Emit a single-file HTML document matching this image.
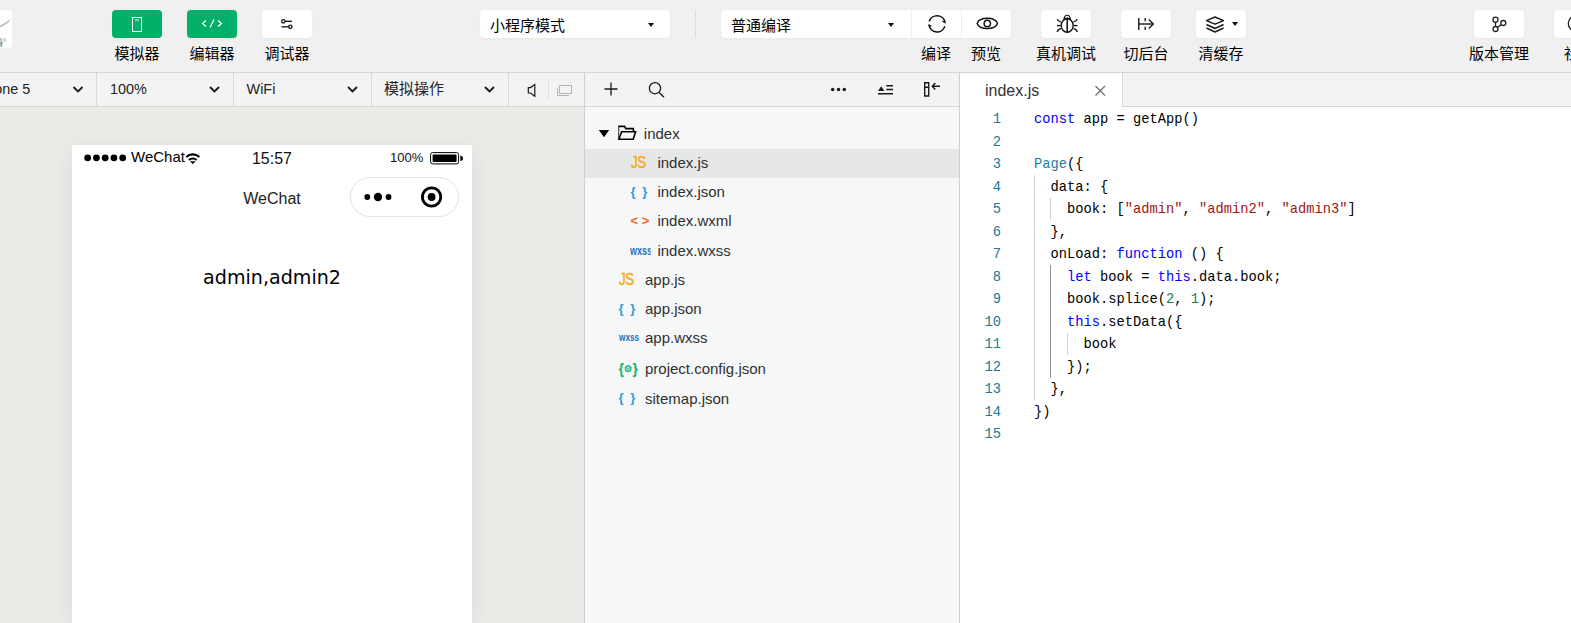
<!DOCTYPE html>
<html lang="zh-CN">
<head>
<meta charset="utf-8">
<title>微信开发者工具</title>
<style>
*{box-sizing:border-box;margin:0;padding:0}
html,body{width:1571px;height:623px;overflow:hidden;background:#f0f0f0}
body{position:relative;font-family:"Liberation Sans","Noto Sans CJK SC",sans-serif;color:#1a1a1a;font-size:15px}
.abs{position:absolute}
/* top toolbar */
#top{left:0;top:0;width:1571px;height:72px;background:#f0f0f0}
#topline{left:0;top:72px;width:1571px;height:1px;background:#d4d4d4}
.btn{position:absolute;top:10px;width:50px;height:28px;border-radius:4px;background:#fff;box-shadow:0 1px 3px rgba(0,0,0,.04)}
.btn.g{background:#02b06a}
.btn svg{position:absolute;left:0;top:0}
.lbl{position:absolute;top:44px;height:20px;line-height:20px;font-size:15px;color:#000;text-align:center;white-space:nowrap;width:90px;margin-left:-45px}
.sel{position:absolute;top:10px;height:28px;background:#fff;border-radius:4px;font-size:15px;line-height:32px;color:#000;white-space:nowrap;box-shadow:0 1px 3px rgba(0,0,0,.04)}
.caret{position:absolute;width:0;height:0;border-left:3.5px solid transparent;border-right:3.5px solid transparent;border-top:4px solid #111}
/* second bar */
#bar2{left:0;top:73px;width:1571px;height:33px;background:#f3f3f3}
#bar2line{left:0;top:106px;width:1571px;height:1px;background:#d6d6d6}
.vd{position:absolute;top:73px;width:1px;height:33px;background:#d9d9d9}
.t2{position:absolute;top:73px;height:33px;line-height:32px;font-size:14.400px;color:#222;white-space:nowrap}
/* simulator */
#sim{left:0;top:107px;width:584px;height:516px;background:#ecebe8}
#simline{left:584px;top:73px;width:1px;height:550px;background:#d0d0d0}
#phone{left:72px;top:145px;width:400px;height:478px;background:#fff;box-shadow:0 4px 22px rgba(0,0,0,.075)}
/* tree */
#tree{left:585px;top:107px;width:374px;height:516px;background:#f6f8f8}
#treeline{left:959px;top:73px;width:1px;height:550px;background:#d0d0d0}
.row{position:absolute;left:585px;width:374px;height:29px;font-size:15px;line-height:29px;color:#303030;white-space:nowrap}
.row span.n{position:absolute;top:0}
.ic{font-family:"Liberation Sans",sans-serif;width:22px;text-align:center;white-space:nowrap}
.ic.js{color:#f7a823;font-size:17px;letter-spacing:-.5px;-webkit-text-stroke:.5px #f7a823;transform:scaleX(.78);transform-origin:0 50%;text-align:left;width:auto}
.ic.jn{color:#1e9fe0;font-weight:bold;font-size:13px;text-align:left;width:auto;word-spacing:3px;margin-top:-.5px}
.ic.xm{color:#f0642a;font-weight:bold;font-size:13px;text-align:left;width:auto}
.ic.ws{color:#1f6fc4;font-weight:bold;font-size:10px;text-align:left;width:auto;transform:scaleX(.82);transform-origin:0 50%}
.ic.ws.big{font-size:13px;transform:scaleX(.69);width:29.600px;overflow:hidden;margin-top:-.5px}
.ic.cf{color:#12b36b;font-weight:bold;font-size:14px;text-align:left;width:auto}
.ic.cf i{font-style:normal;font-size:9.500px;font-weight:bold;-webkit-text-stroke:.4px #12b36b;font-family:"DejaVu Sans",sans-serif;vertical-align:1.5px}
/* editor */
#ed{left:960px;top:107px;width:611px;height:516px;background:#fff}
#tab{left:960px;top:73px;width:162px;height:34px;background:#fff}
#tabr{left:1122px;top:73px;width:1px;height:33px;background:#d6d6d6}
.ln{position:absolute;left:960px;width:41px;text-align:right;font-family:"Liberation Mono",monospace;font-size:13.75px;line-height:22.5px;height:22.5px;color:#237893}
.cl{position:absolute;left:1034px;font-family:"Liberation Mono",monospace;font-size:13.75px;line-height:22.5px;height:22.5px;color:#000;white-space:pre}
.k{color:#0000ff}.s{color:#a31515}.nm{color:#098658}.t{color:#267f99}
.ig{position:absolute;width:1px;background:#d3d3d3}
</style>
</head>
<body>
<div id="top" class="abs"></div>
<div id="topline" class="abs"></div>
<div id="bar2" class="abs"></div>
<div id="bar2line" class="abs"></div>
<div id="sim" class="abs"></div>
<div id="tree" class="abs"></div>
<div id="ed" class="abs"></div>
<div id="simline" class="abs"></div>
<div id="treeline" class="abs"></div>
<div id="tab" class="abs"></div>
<div id="tabr" class="abs"></div>
<div id="phone" class="abs"></div>
<!--TOP-->
<!-- avatar -->
<div class="abs" style="left:-38px;top:10px;width:50px;height:38px;background:#fff;border-radius:4px;overflow:hidden">
<svg width="50" height="38" viewBox="0 0 50 38"><path d="M36 16.200 C41 14 45 11.500 48.800 9 C47.500 13 42 16.500 36.500 18.300 Z" fill="#cfd4cf"/><path d="M37 16.800 C41 14.800 44 13 47 10.800" stroke="#a9b0a9" stroke-width=".7" fill="none"/><text x="36" y="31.500" font-size="4.500" fill="#555" font-family="Liberation Sans, Noto Sans CJK SC, sans-serif">的人</text><text x="36.500" y="36" font-size="4.200" fill="#444" font-family="Liberation Sans, Noto Sans CJK SC, sans-serif">缘</text></svg>
</div>
<!-- simulator btn -->
<div class="btn g" style="left:112px"><svg width="50" height="28" viewBox="0 0 50 28"><rect x="20.5" y="7.5" width="9" height="14" fill="none" stroke="#fff" stroke-width="1"/><rect x="23" y="9.3" width="4" height="1.2" fill="#fff" opacity=".8"/></svg></div>
<div class="lbl" style="left:137px">模拟器</div>
<div class="btn g" style="left:187px"><svg width="50" height="28" viewBox="0 0 50 28" fill="none" stroke="#fff" stroke-width="1.3"><path d="M19 10.5 L15.5 13.5 L19 16.5"/><path d="M27 9.5 L23 17.5"/><path d="M31 10.5 L34.5 13.5 L31 16.5"/></svg></div>
<div class="lbl" style="left:212px">编辑器</div>
<div class="btn" style="left:262px"><svg width="50" height="28" viewBox="0 0 50 28" fill="none" stroke="#1a1a1a" stroke-width="1.35"><circle cx="21.3" cy="11.3" r="1.7"/><path d="M23 11.3 H30"/><circle cx="28.3" cy="16.8" r="1.7"/><path d="M19.5 16.8 H26.6"/></svg></div>
<div class="lbl" style="left:287px">调试器</div>
<!-- mode select -->
<div class="sel" style="left:480px;width:190px;padding-left:10px">小程序模式</div>
<div class="caret" style="left:647.5px;top:22.800px"></div>
<div class="abs" style="left:695px;top:10px;width:1px;height:28px;background:#dcdcdc"></div>
<!-- compile select -->
<div class="sel" style="left:721px;width:290px;padding-left:10px">普通编译</div>
<div class="caret" style="left:887.5px;top:22.800px"></div>
<div class="abs" style="left:911px;top:10px;width:1px;height:28px;background:#eee"></div>
<div class="abs" style="left:961px;top:10px;width:1px;height:28px;background:#eee"></div>
<svg class="abs" style="left:911px;top:10px" width="50" height="28" viewBox="0 0 50 28" fill="none" stroke="#111" stroke-width="1.5"><path d="M18.24 11.42 A8.15 8.15 0 0 1 34.10 12.67"/><path d="M33.82 16.18 A8.15 8.15 0 0 1 17.96 14.93"/><path d="M34.900 13.700 L30.800 11.600 L33.600 10.600 Z" fill="#111" stroke="none"/><path d="M17.150 13.900 L21.250 16 L18.450 17 Z" fill="#111" stroke="none"/></svg>
<div class="lbl" style="left:936px">编译</div>
<svg class="abs" style="left:961px;top:10px" width="50" height="28" viewBox="0 0 50 28" fill="none" stroke="#111" stroke-width="1.4"><path d="M16.100 13.400 C17.500 9.800 22 8.300 26.300 8.300 C30.600 8.300 35.100 9.800 36.500 13.400 C35.100 17 30.600 18.500 26.300 18.500 C22 18.500 17.500 17 16.100 13.400 Z"/><circle cx="26.300" cy="13.400" r="3.200"/></svg>
<div class="lbl" style="left:986px">预览</div>
<!-- real device debug -->
<div class="btn" style="left:1041px"><svg width="50" height="28" viewBox="0 0 50 28" fill="none" stroke="#111" stroke-width="1.4"><ellipse cx="26.200" cy="15.500" rx="6" ry="6.750"/><path d="M26.200 7.500 V22" stroke-width="1.500"/><path d="M22.900 9.600 C23.600 3.800 28.800 3.800 29.500 9.600" stroke-width="1.200"/><path d="M23.300 8.300 H29.100" stroke-width="1"/><path d="M19.900 11.900 C17.800 11.500 16.600 10.500 16.200 9.100"/><path d="M19.600 15.600 H16"/><path d="M19.900 18.600 C17.800 19 16.600 20.200 16.200 21.800"/><path d="M32.500 11.900 C34.600 11.500 35.800 10.500 36.200 9.100"/><path d="M32.800 15.600 H36.400"/><path d="M32.500 18.600 C34.600 19 35.800 20.200 36.200 21.800"/></svg></div>
<div class="lbl" style="left:1066px">真机调试</div>
<div class="btn" style="left:1121px"><svg width="50" height="28" viewBox="0 0 50 28" fill="none" stroke="#1a1a1a" stroke-width="1.4"><path d="M17.800 8 V20"/><path d="M17.800 14 H31.800"/><path d="M27.800 9.500 L32.300 14 L27.800 18.500"/><path d="M24.200 8 V11.200 M24.200 16.800 V20"/></svg></div>
<div class="lbl" style="left:1146px">切后台</div>
<div class="btn" style="left:1196px"><svg width="50" height="28" viewBox="0 0 50 28" fill="none" stroke="#1a1a1a" stroke-width="1.4" stroke-linejoin="round"><path d="M10.500 10.600 L19 7 L27.500 10.600 L19 14.200 Z"/><path d="M10.5 14.5 L19 18.5 L27.5 14.5"/><path d="M10.5 18 L19 22 L27.5 18"/></svg></div>
<div class="caret" style="left:1231.5px;top:22px"></div>
<div class="lbl" style="left:1221px">清缓存</div>
<!-- version mgmt -->
<div class="btn" style="left:1474px"><svg width="50" height="28" viewBox="0 0 50 28" fill="none" stroke="#222" stroke-width="1.3"><circle cx="21.5" cy="9.7" r="2.5"/><circle cx="21.5" cy="19" r="2.5"/><circle cx="29.3" cy="13" r="2.5"/><path d="M21.5 12.2 V16.5"/><path d="M23.5 17.3 L27.3 14.6"/></svg></div>
<div class="lbl" style="left:1499px">版本管理</div>
<div class="btn" style="left:1554px"><svg width="50" height="28" viewBox="0 0 50 28" fill="none" stroke="#222" stroke-width="1.3"><circle cx="22.300" cy="13.500" r="8"/></svg></div>
<div class="lbl" style="left:1609px;text-align:left">社区</div>
<!--/TOP-->
<!--BAR2-->
<div class="vd" style="left:96px"></div>
<div class="vd" style="left:233px"></div>
<div class="vd" style="left:371px"></div>
<div class="vd" style="left:508px"></div>
<div class="t2" style="left:-26.500px">iPhone 5</div>
<div class="t2" style="left:110px">100%</div>
<div class="t2" style="left:246.600px">WiFi</div>
<div class="t2" style="left:384px;font-size:15px">模拟操作</div>
<svg class="abs" style="left:0;top:73px" width="600" height="33" viewBox="0 0 600 33" fill="none" stroke="#1a1a1a" stroke-width="1.8">
<path d="M73.5 14 L78 18.5 L82.5 14"/>
<path d="M210 14 L214.5 18.5 L219 14"/>
<path d="M348 14 L352.5 18.5 L357 14"/>
<path d="M485 14 L489.500 18.5 L494 14"/>
<path d="M534.800 11.400 L530.600 14.600 H528.300 V20 H530.600 L534.800 23.200 Z" stroke-width="1.2" stroke-linejoin="miter"/>
<path d="M548.500 6 V27" stroke="#e0e0e0" stroke-width="1"/>
<path d="M559.500 12.500 H571.500 V20.500 H559.500 Z" stroke="#b4b4b4" stroke-width="1"/>
<path d="M557.500 15 V22.500 H569" stroke="#b4b4b4" stroke-width="1"/>
</svg>
<svg class="abs" style="left:585px;top:73px" width="375" height="33" viewBox="0 0 375 33" fill="none" stroke="#1a1a1a" stroke-width="1.3">
<path d="M26 9.500 V22.500 M19.500 16 H32.500"/>
<circle cx="70" cy="15.200" r="5.600"/><path d="M74 19.500 L79 24.200"/>
<g fill="#1a1a1a" stroke="none"><circle cx="247.700" cy="16.600" r="1.750"/><circle cx="253.500" cy="16.600" r="1.750"/><circle cx="259.300" cy="16.600" r="1.750"/></g>
<path d="M293 18 L296.200 13.300 L299.400 18 Z" fill="#1a1a1a" stroke="none"/>
<path d="M301.300 12.800 H308 M301.300 16.400 H308 M293 20.800 H308" stroke-width="1.500"/>
<path d="M339.700 9.800 H343.700 V23 H339.700 Z M339.700 14.300 H343.700" stroke-width="1.400"/>
<path d="M347.300 13.200 H355 M350.300 10 L347.300 13.200 L350.300 16.400" stroke-width="1.400"/>
</svg>
<!--/BAR2-->
<!--PHONE-->
<svg class="abs" style="left:72px;top:145px" width="400" height="80" viewBox="0 0 400 80">
<g fill="#000"><circle cx="15.700" cy="12.800" r="3.400"/><circle cx="24.450" cy="12.800" r="3.400"/><circle cx="33.200" cy="12.800" r="3.400"/><circle cx="41.950" cy="12.800" r="3.400"/><circle cx="50.700" cy="12.800" r="3.400"/></g>
<g fill="none" stroke="#000" stroke-width="2.100"><path d="M114.300 12 A9.300 9.300 0 0 1 127.300 12"/><path d="M117 15 A5.400 5.400 0 0 1 124.600 15"/></g>
<path d="M118 16.300 H123.600 L120.800 19.300 Z" fill="#000"/>
<rect x="358.600" y="7.600" width="28" height="11.300" rx="2" fill="none" stroke="#000" stroke-width="1"/>
<rect x="360.600" y="9.600" width="24" height="7.300" rx="1" fill="#000"/>
<path d="M388.300 10.400 C392 11 392 15.500 388.300 16.100 Z" fill="#000"/>
<rect x="278.500" y="32.500" width="108" height="39" rx="19.500" fill="#fff" stroke="#e4e4e4" stroke-width="1"/>
<g fill="#000"><circle cx="295.300" cy="52" r="2.900"/><circle cx="306" cy="52" r="4.200"/><circle cx="316.500" cy="52" r="2.900"/></g>
<circle cx="359.600" cy="52" r="9.200" fill="none" stroke="#000" stroke-width="2.800"/><circle cx="359.600" cy="52" r="3.900" fill="#000"/>
</svg>
<div class="abs" style="left:131px;top:148px;font-size:15px;line-height:18px;color:#000">WeChat</div>
<div class="abs" style="left:172px;top:148.500px;width:200px;text-align:center;font-size:16px;line-height:20px;color:#111">15:57</div>
<div class="abs" style="left:390px;top:148.500px;font-size:13px;line-height:18px;color:#111">100%</div>
<div class="abs" style="left:172px;top:189px;width:200px;text-align:center;font-size:16px;line-height:20px;color:#222">WeChat</div>
<div class="abs" style="left:122px;top:264px;width:300px;text-align:center;font-family:'DejaVu Sans','Liberation Sans',sans-serif;font-size:19.100px;line-height:28px;color:#000">admin,admin2</div>
<!--/PHONE-->
<!--TREE-->
<div class="abs" style="left:585px;top:149px;width:374px;height:29px;background:#e6e8e8"></div>
<svg class="abs" style="left:585px;top:107px" width="374" height="310" viewBox="0 0 374 310">
<path d="M13.800 23 H24.200 L19 30.200 Z" fill="#000"/>
<g fill="none" stroke="#000" stroke-width="1.600" stroke-linejoin="miter"><path d="M33.400 19.400 H39.600 L40.800 21.600 H48.200 L48.600 24.200"/><path d="M33.900 32.200 L36.600 24.800 H50.600 L48.200 32.200 Z"/><path d="M33.700 19.400 V31.500" stroke-width=".800"/></g>
</svg>
<div class="row" style="top:119px"><span class="n" style="left:58.800px">index</span></div>
<div class="row" style="top:148px"><span class="n ic js" style="left:45.500px">JS</span><span class="n" style="left:72.400px">index.js</span></div>
<div class="row" style="top:177px"><span class="n ic jn" style="left:45.500px">{ }</span><span class="n" style="left:72.400px">index.json</span></div>
<div class="row" style="top:206px"><span class="n ic xm" style="left:45.500px">&lt; &gt;</span><span class="n" style="left:72.400px">index.wxml</span></div>
<div class="row" style="top:236px"><span class="n ic ws big" style="left:44.800px">wxss</span><span class="n" style="left:72.400px">index.wxss</span></div>
<div class="row" style="top:265px"><span class="n ic js" style="left:33.500px">JS</span><span class="n" style="left:60px">app.js</span></div>
<div class="row" style="top:294px"><span class="n ic jn" style="left:33.500px">{ }</span><span class="n" style="left:60px">app.json</span></div>
<div class="row" style="top:323px"><span class="n ic ws" style="left:33.500px">wxss</span><span class="n" style="left:60px">app.wxss</span></div>
<div class="row" style="top:354px"><span class="n ic cf" style="left:33.500px">{<i>⚙</i>}</span><span class="n" style="left:60px">project.config.json</span></div>
<div class="row" style="top:383.500px"><span class="n ic jn" style="left:33.500px">{ }</span><span class="n" style="left:60px">sitemap.json</span></div>
<!--/TREE-->
<!--EDITOR-->
<div class="abs" style="left:985px;top:74px;height:34px;line-height:34px;font-size:16px;color:#333">index.js</div>
<svg class="abs" style="left:1090px;top:80.500px" width="20" height="20" viewBox="0 0 20 20" fill="none" stroke="#6e6e6e" stroke-width="1.200"><path d="M5.500 5 L15 14.500 M15 5 L5.500 14.500"/></svg>
<div class="ln" style="top:109.1px">1</div>
<div class="cl" style="top:109.1px"><span class="k">const</span> app = getApp()</div>
<div class="ln" style="top:131.6px">2</div>
<div class="ln" style="top:154.1px">3</div>
<div class="cl" style="top:154.1px"><span class="t">Page</span>({</div>
<div class="ln" style="top:176.6px">4</div>
<div class="cl" style="top:176.6px">  data<span>:</span> {</div>
<div class="ln" style="top:199.1px">5</div>
<div class="cl" style="top:199.1px">    book: [<span class="s">"admin"</span>, <span class="s">"admin2"</span>, <span class="s">"admin3"</span>]</div>
<div class="ln" style="top:221.6px">6</div>
<div class="cl" style="top:221.6px">  },</div>
<div class="ln" style="top:244.1px">7</div>
<div class="cl" style="top:244.1px">  onLoad: <span class="k">function</span> () {</div>
<div class="ln" style="top:266.6px">8</div>
<div class="cl" style="top:266.6px">    <span class="k">let</span> book = <span class="k">this</span>.data.book;</div>
<div class="ln" style="top:289.1px">9</div>
<div class="cl" style="top:289.1px">    book.splice(<span class="nm">2</span>, <span class="nm">1</span>);</div>
<div class="ln" style="top:311.6px">10</div>
<div class="cl" style="top:311.6px">    <span class="k">this</span>.setData({</div>
<div class="ln" style="top:334.1px">11</div>
<div class="cl" style="top:334.1px">      book</div>
<div class="ln" style="top:356.6px">12</div>
<div class="cl" style="top:356.6px">    });</div>
<div class="ln" style="top:379.1px">13</div>
<div class="cl" style="top:379.1px">  },</div>
<div class="ln" style="top:401.6px">14</div>
<div class="cl" style="top:401.6px">})</div>
<div class="ln" style="top:424.1px">15</div>
<div class="ig" style="left:1034px;top:175.0px;height:225.0px;background:#d3d3d3"></div>
<div class="ig" style="left:1050px;top:197.5px;height:22.5px;background:#d3d3d3"></div>
<div class="ig" style="left:1050px;top:265.0px;height:112.5px;background:#939393"></div>
<div class="ig" style="left:1067px;top:332.5px;height:22.5px;background:#d3d3d3"></div>
<!--/EDITOR-->
</body>
</html>
